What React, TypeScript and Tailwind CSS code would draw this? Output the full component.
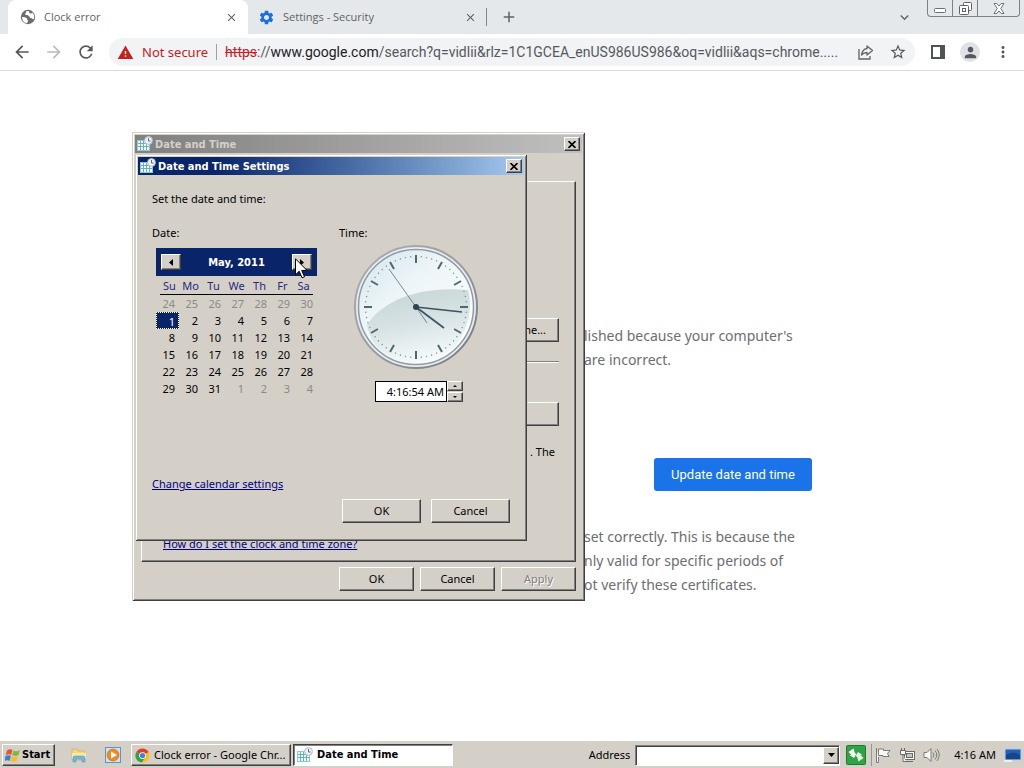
import React from "react";
import {
  MdAdd,
  MdArrowBack,
  MdArrowForward,
  MdClose,
  MdExpandMore,
  MdMoreVert,
  MdPerson,
  MdRefresh,
  MdSettings,
  MdStarBorder,
  MdWarning,
} from "react-icons/md";

const RAISED =
  "border border-t-white border-l-white border-r-[#404040] border-b-[#404040] bg-[#d4d0c8] shadow-[inset_-1px_-1px_0_#808080]";
const FRAME =
  "bg-[#d4d0c8] p-[3px] shadow-[inset_1px_1px_0_#d4d0c8,inset_-1px_-1px_0_#404040,inset_2px_2px_0_#ffffff,inset_-2px_-2px_0_#808080]";
const STRONG = "font-['DejaVu_Sans_Condensed','Noto_Sans',sans-serif] font-bold";

const WEEKDAYS = ["Su", "Mo", "Tu", "We", "Th", "Fr", "Sa"];
const WEEKS = [
  [24, 25, 26, 27, 28, 29, 30],
  [1, 2, 3, 4, 5, 6, 7],
  [8, 9, 10, 11, 12, 13, 14],
  [15, 16, 17, 18, 19, 20, 21],
  [22, 23, 24, 25, 26, 27, 28],
  [29, 30, 31, 1, 2, 3, 4],
];

function DateTimeIcon() {
  return (
    <svg width="16" height="16" viewBox="0 0 16 16" className="shrink-0" aria-hidden="true">
      <rect x="0.5" y="4.5" width="12" height="10" fill="#f4ffff" stroke="#8fc9cf" />
      <path d="M1 7.500h11M1 10.500h11M3.500 5v9M6.500 5v9M9.500 5v9" stroke="#63b3b9" />
      <circle cx="11.500" cy="4.500" r="3.900" fill="#eef1f5" stroke="#b3bac4" />
      <path d="M11.500 2v3h2" fill="none" stroke="#5d6b7b" />
    </svg>
  );
}

function GlobeIcon() {
  return (
    <svg width="16" height="16" viewBox="0 0 16 16" aria-hidden="true">
      <circle cx="8" cy="8" r="7.200" fill="#6a6e72" />
      <path d="M2 8.200q2.400-0.500 4 0.600q1.600 0.300 1.300 1.900q1 0.500 0.600 1.700q-0.900 0.900-0.700 1.900q-4.900-0.700-5.200-6.100z" fill="#fff" />
      <path d="M6 2.300q0.800 2-0.900 2.300q-0.400 1.500 1.400 1.300q1.900-0.200 2.200 1.400q1.700 0.200 1.300 1.800q1.900-0.300 2.600 0.900l1.200 0.200q1.400-4.200-1.600-6.700q-0.500 1.500-2 1q-1.300-0.600-1.200-2.300q-1.600-0.400-3 0.100z" fill="#fff" />
    </svg>
  );
}

function CloseButton({ label }: { label: string }) {
  return (
    <button type="button" aria-label={label} className={`flex h-[14px] w-4 items-center justify-center ${RAISED}`}>
      <svg width="8" height="7" viewBox="0 0 8 7" aria-hidden="true">
        <path d="M0.5 0l7 7M7.5 0l-7 7" stroke="#000" strokeWidth="1.6" />
      </svg>
    </button>
  );
}

function DialogButton({ children, className = "", disabled = false }: { children?: React.ReactNode; className?: string; disabled?: boolean }) {
  return (
    <button
      type="button"
      disabled={disabled}
      className={`h-6 ${RAISED} ${disabled ? "text-[#808080] [text-shadow:1px_1px_0_#ffffff]" : "text-black"} ${className}`}
    >
      {children}
    </button>
  );
}

function Clock() {
  const ticks = Array.from({ length: 60 }, (_, i) => i);
  return (
    <svg width="128" height="128" viewBox="0 0 128 128" role="img" aria-label="4:16:54 AM">
      <defs>
        <linearGradient id="rim" x1="0" y1="0" x2="1" y2="1">
          <stop offset="0" stopColor="#aaafb3" />
          <stop offset="0.5" stopColor="#989ca1" />
          <stop offset="1" stopColor="#74787e" />
        </linearGradient>
        <linearGradient id="face" x1="0" y1="0" x2="0.8" y2="1">
          <stop offset="0" stopColor="#d5e4eb" />
          <stop offset="0.4" stopColor="#edf5f8" />
          <stop offset="1" stopColor="#ffffff" />
        </linearGradient>
        <linearGradient id="shade" x1="0.3" y1="0" x2="0.6" y2="1">
          <stop offset="0" stopColor="#c8d6d7" />
          <stop offset="0.45" stopColor="#d6e2e4" />
          <stop offset="1" stopColor="#f8fcfd" />
        </linearGradient>
      </defs>
      <circle cx="64" cy="64" r="61" fill="#e9ecee" stroke="url(#rim)" strokeWidth="2" />
      <circle cx="64" cy="64" r="57.5" fill="url(#face)" stroke="#8f9ba8" strokeWidth="1.500" />
      <path d="M15 82C28 60 64 42 116 47C121 66 116 87 103 103C85 123 50 127 28 107C21 100 17 92 15 82Z" fill="url(#shade)" />
      {ticks.map((i) =>
        i % 5 === 0 ? (
          <path key={i} d="M64 12v8" stroke="#4c6a6c" strokeWidth="2" transform={`rotate(${i * 6} 64 64)`} />
        ) : (
          <circle key={i} cx="64" cy="13.5" r="0.7" fill="#7b8e96" transform={`rotate(${i * 6} 64 64)`} />
        ),
      )}
      <path d="M64 64L37 26M64 64l11 16" stroke="#626e75" strokeWidth="0.8" />
      <path d="M64 64l28 21" stroke="#3c5360" strokeWidth="1.700" />
      <path d="M64 64l46 5" stroke="#3c5360" strokeWidth="1.700" />
      <circle cx="64" cy="64" r="3" fill="#2c4354" />
    </svg>
  );
}

function Calendar() {
  return (
    <div className="mt-[7px] ml-1 w-[161px]">
      <div className="flex h-7 items-center justify-between bg-[#0a246a] px-[5px]">
        <button type="button" aria-label="Previous month" className={`flex h-4 w-5 items-center justify-center ${RAISED}`}>
          <svg width="4" height="7" viewBox="0 0 4 7" aria-hidden="true">
            <path d="M4 0v7L0 3.500z" />
          </svg>
        </button>
        <span className={`pt-[2px] text-white ${STRONG}`}>May, 2011</span>
        <button type="button" aria-label="Next month" className={`flex h-4 w-5 items-center justify-center ${RAISED}`}>
          <svg width="4" height="7" viewBox="0 0 4 7" aria-hidden="true">
            <path d="M0 0v7l4-3.500z" />
          </svg>
        </button>
      </div>
      <table className="w-full table-fixed border-collapse">
        <thead>
          <tr className="h-[19px]">
            {WEEKDAYS.map((day) => (
              <th key={day} scope="col" className="group p-0 font-normal text-[#28287c]">
                <span className="block h-[18px] border-b border-black leading-[18px] group-first:ml-1 group-last:mr-1">{day}</span>
              </th>
            ))}
          </tr>
        </thead>
        <tbody>
          {WEEKS.map((week, row) => (
            <tr key={row} className="h-[17px]">
              {week.map((day, col) => {
                const outside = (row === 0 && day > 7) || (row === 5 && day < 7);
                const selected = row === 1 && col === 0;
                return (
                  <td key={col} className="p-0">
                    <button
                      type="button"
                      className={`block h-[17px] w-full pr-1 text-right leading-[17px] ${
                        selected ? "border border-dotted border-white bg-[#0a246a] pr-[3px] leading-[15px] text-white" : outside ? "text-[#8c8a86]" : "text-black"
                      }`}
                    >
                      {day}
                    </button>
                  </td>
                );
              })}
            </tr>
          ))}
        </tbody>
      </table>
    </div>
  );
}

function SettingsDialog() {
  return (
    <section aria-label="Date and Time Settings" className={`absolute top-[154px] left-[135px] flex h-[387px] w-[392px] flex-col ${FRAME}`}>
      <header className="flex h-[18px] items-center gap-[2px] bg-linear-to-r from-[#0a246a] from-20% to-[#a6caf0] px-[2px]">
        <DateTimeIcon />
        <h2 className={`flex-1 pt-px text-white ${STRONG}`}>Date and Time Settings</h2>
        <CloseButton label="Close settings" />
      </header>
      <div className="flex flex-1 flex-col px-[14px] pt-4 pb-[15px]">
        <p>Set the date and time:</p>
        <div className="mt-[18px] flex">
          <div className="w-[187px]">
            <p>Date:</p>
            <Calendar />
          </div>
          <div>
            <label htmlFor="time">Time:</label>
            <div className="mt-[2px] ml-[13px]">
              <Clock />
            </div>
            <div className="mt-[10px] ml-9 flex">
              <input id="time" defaultValue="4:16:54 AM" className="h-[21px] w-[72px] border border-black bg-white pr-[2px] text-right" />
              <div className="flex w-4 flex-col gap-px">
                <button type="button" aria-label="Increase" className={`flex h-[10px] items-center justify-center ${RAISED}`}>
                  <svg width="4" height="2" viewBox="0 0 4 2" aria-hidden="true">
                    <path d="M0 2h4L2 0z" />
                  </svg>
                </button>
                <button type="button" aria-label="Decrease" className={`flex h-[10px] items-center justify-center ${RAISED}`}>
                  <svg width="4" height="2" viewBox="0 0 4 2" aria-hidden="true">
                    <path d="M0 0h4L2 2z" />
                  </svg>
                </button>
              </div>
            </div>
          </div>
        </div>
        <a href="#calendar" className="mt-auto self-start text-[#00007f] underline">
          Change calendar settings
        </a>
        <div className="mt-[7px] flex justify-end gap-[10px]">
          <DialogButton className="w-[79px]">OK</DialogButton>
          <DialogButton className="w-[79px]">Cancel</DialogButton>
        </div>
      </div>
    </section>
  );
}

function DateTimeWindow() {
  return (
    <section aria-label="Date and Time" className={`absolute top-[132px] left-[132px] flex h-[469px] w-[453px] flex-col ${FRAME}`}>
      <header className="flex h-[18px] items-center gap-[2px] bg-linear-to-r from-[#808080] to-[#c0c0c0] px-[2px]">
        <DateTimeIcon />
        <h2 className={`flex-1 pt-px text-[#d4d0c8] ${STRONG}`}>Date and Time</h2>
        <CloseButton label="Close" />
      </header>
      <div className="flex flex-1 flex-col px-[6px] pt-7 pb-[7px]">
        <div className={`flex flex-1 flex-col px-4 ${RAISED}`}>
          <DialogButton className="mt-[136px] w-[130px] self-end pr-3 text-right">ne...</DialogButton>
          <hr className="mt-[19px] border-t-[#808080] shadow-[0_1px_0_#ffffff]" />
          <DialogButton className="mt-10 w-[130px] self-end" />
          <p className="mt-[18px] self-end pr-1">. The</p>
          <a href="#help" className="mt-auto mb-[9px] ml-[5px] self-start text-[#00007f] underline">
            How do I set the clock and time zone?
          </a>
        </div>
        <div className="mt-[5px] flex justify-end gap-[6px]">
          <DialogButton className="w-[75px]">OK</DialogButton>
          <DialogButton className="w-[75px]">Cancel</DialogButton>
          <DialogButton className="w-[75px]" disabled>
            Apply
          </DialogButton>
        </div>
      </div>
    </section>
  );
}

function TabStrip() {
  return (
    <div className="flex h-[34px] items-stretch bg-[#e4e8eb] pl-2 font-['Open_Sans',sans-serif] text-[#5f6368]">
      <div className="flex w-[240px] items-center rounded-t-lg bg-white pr-[10px] pl-3">
        <GlobeIcon />
        <span className="ml-2 flex-1">Clock error</span>
        <button type="button" aria-label="Close tab">
          <MdClose size={13} />
        </button>
      </div>
      <div className="flex w-[238px] items-center pr-[9px] pl-[10px]">
        <MdSettings size={17} className="text-[#1a6fe0]" />
        <span className="ml-2 flex-1">Settings - Security</span>
        <button type="button" aria-label="Close tab">
          <MdClose size={13} />
        </button>
      </div>
      <div className="my-2 w-px bg-[#858a8f]" />
      <button type="button" aria-label="New tab" className="ml-[13px]">
        <MdAdd size={18} />
      </button>
      <div className="flex-1" />
      <button type="button" aria-label="Search tabs" className="mr-[14px]">
        <MdExpandMore size={17} />
      </button>
      <div className="mr-1 flex h-[17px] w-[93px] rounded-b border border-t-0 border-[#7b8187]">
        <button type="button" aria-label="Minimize" className="flex w-[25px] items-center justify-center border-r border-[#7b8187]">
          <svg width="12" height="5" viewBox="0 0 12 5" className="mt-1" aria-hidden="true">
            <rect x="0.5" y="0.5" width="11" height="4" rx="1" fill="#fff" stroke="#6b7076" />
          </svg>
        </button>
        <button type="button" aria-label="Restore" className="flex w-[25px] items-center justify-center border-r border-[#7b8187]">
          <svg width="13" height="13" viewBox="0 0 13 13" fill="#fff" stroke="#5c6167" aria-hidden="true">
            <rect x="4.5" y="0.5" width="8" height="8" rx="1" />
            <rect x="0.5" y="3.5" width="9" height="9" rx="1" />
            <rect x="3.5" y="6.5" width="3" height="3" />
          </svg>
        </button>
        <button type="button" aria-label="Close window" className="flex flex-1 items-center justify-center">
          <svg width="12" height="11" viewBox="0 0 12 11" aria-hidden="true">
            <path d="M1 0.500h2.800L6 3l2.200-2.500H11L7.800 5.500L11 10.500H8.200L6 8l-2.200 2.500H1L4.200 5.500z" fill="#fff" stroke="#6b7076" />
          </svg>
        </button>
      </div>
    </div>
  );
}

function Toolbar() {
  return (
    <div className="flex h-[37px] items-center border-b border-[#d9dbdd] bg-white pr-3 pl-3 text-[#55595e]">
      <button type="button" aria-label="Back">
        <MdArrowBack size={20} />
      </button>
      <button type="button" aria-label="Forward" className="ml-3 text-[#b9bbbe]">
        <MdArrowForward size={20} />
      </button>
      <button type="button" aria-label="Reload" className="ml-3">
        <MdRefresh size={20} />
      </button>
      <div className="ml-[13px] flex h-7 min-w-0 flex-1 items-center rounded-full bg-[#f1f3f4] px-2">
        <MdWarning size={17} className="shrink-0 text-[#c5221f]" />
        <span className="ml-2 shrink-0 text-[13px] text-[#c5221f]">Not secure</span>
        <span className="mx-2 h-4 w-px shrink-0 bg-[#9aa0a6]" />
        <div role="textbox" aria-label="Address and search bar" className="min-w-0 flex-1 overflow-hidden font-['Roboto',sans-serif] text-[14px] whitespace-nowrap">
          <span className="text-[#c5221f] line-through">https</span>://<span className="text-[#202124]">www.google.com</span>
          /search?q=vidlii&amp;rlz=1C1GCEA_enUS986US986&amp;oq=vidlii&amp;aqs=chrome.....
        </div>
        <button type="button" aria-label="Share" className="ml-3">
          <svg width="18" height="16" viewBox="0 0 18 16" fill="none" stroke="#5f6368" strokeWidth="1.3" aria-hidden="true">
            <path d="M2 5v10h11v-3" />
            <path d="M10 2l5.5 4.5L10 11V8.5C7.500 8.500 5.800 9.300 4.500 11C5 7.500 6.800 5 10 4.500Z" strokeLinejoin="round" />
          </svg>
        </button>
        <button type="button" aria-label="Bookmark" className="ml-[14px]">
          <MdStarBorder size={18} />
        </button>
      </div>
      <button type="button" aria-label="Side panel" className="ml-4">
        <svg width="14" height="14" viewBox="0 0 14 14" aria-hidden="true">
          <path d="M1 1h12v12H1z" fill="none" stroke="#4f5358" strokeWidth="2" />
          <path d="M9 1h4v12H9z" fill="#4f5358" />
        </svg>
      </button>
      <button type="button" aria-label="Profile" className="ml-[15px] flex size-5 items-center justify-center rounded-full bg-[#dee1e6]">
        <MdPerson size={17} />
      </button>
      <button type="button" aria-label="Menu" className="ml-[14px]">
        <MdMoreVert size={18} />
      </button>
    </div>
  );
}

function ClockErrorPage() {
  return (
    <main className="mx-auto w-full max-w-[600px] flex-1 pt-[253px] text-[14px] leading-6 text-[#6b6e72]">
      <p className="pl-[372px]">
        lished because your computer's
        <br />
        are incorrect.
      </p>
      <div className="mt-[86px] flex justify-end">
        <button type="button" className="h-[33px] w-[158px] rounded-[3px] bg-[#1a73e8] font-['Roboto',sans-serif] text-[13px] text-white">
          Update date and time
        </button>
      </div>
      <p className="mt-[34px] pl-[372px]">
        set correctly. This is because the
        <br />
        nly valid for specific periods of
        <br />
        ot verify these certificates.
      </p>
    </main>
  );
}

function Taskbar() {
  return (
    <footer className="flex h-7 items-center bg-[#d4d0c8] px-[2px] pt-[2px] text-black shadow-[inset_0_1px_0_#ffffff]">
      <button type="button" className={`flex h-[22px] w-[53px] items-center gap-px pl-[2px] ${STRONG} ${RAISED}`}>
        <svg width="16" height="15" viewBox="0 0 16 15" aria-hidden="true">
          <path d="M2 2.500C4 1 6 1 7.500 2L6.200 7C4.500 6 3 6 0.800 7Z" fill="#e2572b" />
          <path d="M8.500 2.500C10.500 3.600 12.500 3.500 15 2L13.500 7C11.500 8.300 9.300 8.300 7.200 7.300Z" fill="#7fb93c" />
          <path d="M0.500 8C2.500 7 4.500 7 6 8L4.600 13C3 12 1.500 12-0.500 13Z" fill="#3f7ed0" />
          <path d="M7 8.300C9 9.400 11 9.400 13.200 8L11.800 13C9.800 14.300 7.600 14.200 5.600 13.200Z" fill="#f3bf2e" />
        </svg>
        Start
      </button>
      <button type="button" aria-label="Windows Explorer" className="ml-4">
        <svg width="16" height="16" viewBox="0 0 16 16" aria-hidden="true">
          <path d="M1 2h5l1 2h7v9H1z" fill="#f2d878" stroke="#cba94c" strokeWidth="0.6" />
          <path d="M1 6h14v6H1z" fill="#f9e9a5" />
          <path d="M2 15v-4q0-2 2-2h8q2 0 2 2v4h-3v-3H5v3z" fill="#74b7e0" stroke="#4b8fbd" strokeWidth="0.5" />
        </svg>
      </button>
      <button type="button" aria-label="Media Player" className="ml-[18px]">
        <svg width="16" height="16" viewBox="0 0 16 16" aria-hidden="true">
          <rect x="0.5" y="0.5" width="15" height="15" fill="#cfe2f4" stroke="#5f94c9" />
          <circle cx="8" cy="8" r="6" fill="#f08a1d" stroke="#c86a0c" strokeWidth="0.6" />
          <path d="M6 4.500v7L12 8z" fill="#fff" />
        </svg>
      </button>
      <button type="button" className={`ml-[10px] flex h-[22px] w-40 items-center gap-1 pl-[3px] whitespace-nowrap ${RAISED}`}>
        <svg width="15" height="15" viewBox="0 0 16 16" className="shrink-0" aria-hidden="true">
          <circle cx="8" cy="8" r="7.500" fill="#fbc116" />
          <path d="M8 8L1.500 4.200A7.500 7.500 0 0 1 14.500 4.200Z" fill="#e33b2e" />
          <path d="M8 8L1.500 4.200A7.500 7.500 0 0 0 7.300 15.500L10.500 10Z" fill="#2fa24c" />
          <circle cx="8" cy="8" r="3.600" fill="#fff" />
          <circle cx="8" cy="8" r="2.800" fill="#3f7fe8" />
        </svg>
        Clock error - Google Chr...
      </button>
      <button
        type="button"
        className={`ml-[2px] flex h-[22px] w-40 items-center gap-1 border border-t-[#404040] border-r-white border-b-white border-l-[#404040] bg-white pl-[3px] shadow-[inset_1px_1px_0_#808080] ${STRONG}`}
      >
        <DateTimeIcon />
        Date and Time
      </button>
      <div className="flex-1" />
      <label htmlFor="address">Address</label>
      <div className="ml-[5px] flex h-[21px] w-[205px] border border-t-[#808080] border-r-white border-b-white border-l-[#808080] bg-white shadow-[inset_1px_1px_0_#404040]">
        <input id="address" className="min-w-0 flex-1 bg-transparent px-1" />
        <button type="button" aria-label="Show addresses" className={`my-px flex w-4 items-center justify-center ${RAISED}`}>
          <svg width="7" height="4" viewBox="0 0 7 4" aria-hidden="true">
            <path d="M0 0h7L3.500 4z" />
          </svg>
        </button>
      </div>
      <button type="button" aria-label="Go" className="ml-[6px]">
        <svg width="20" height="20" viewBox="0 0 20 20" aria-hidden="true">
          <rect x="0.5" y="0.5" width="19" height="19" rx="1" fill="#2fa345" stroke="#1d7a30" />
          <path d="M2.500 7L7.500 3.500L9 8.500h1.500L8 13L3.500 10h2z" fill="#fff" />
          <path d="M17.500 13L12.500 16.500L11 11.500H9.500L12 7l4.500 3h-2z" fill="#e6f8e6" />
        </svg>
      </button>
      <div className="ml-[5px] h-[22px] w-px bg-[#9a968e]" />
      <div className="flex items-center gap-2 pl-[3px]">
        <svg width="16" height="16" viewBox="0 0 16 16" fill="#f8f8f6" stroke="#7d7b77" aria-hidden="true">
          <path d="M1.500 1v14.500h2V10M3.500 2h5v1.500h6.500L12.500 6.500L14 9.500H8V8.500H3.500Z" />
        </svg>
        <svg width="16" height="16" viewBox="0 0 16 16" fill="#f8f8f6" stroke="#6c6a67" aria-hidden="true">
          <rect x="5.500" y="4.500" width="10" height="8" />
          <rect x="7.500" y="6.500" width="6" height="4" fill="#c8c6c1" />
          <path d="M7 14.500h7M1.500 3.500h5v4h-5zM2.500 1v2M5.500 1v2M4 8v6.500h3" />
        </svg>
        <svg width="17" height="16" viewBox="0 0 17 16" fill="none" stroke="#7d7b77" aria-hidden="true">
          <path d="M1 5.500h3l4-4v13l-4-4H1z" fill="#f8f8f6" />
          <path d="M10 5.500q2 2.500 0 5M12 3.500q3.500 4.500 0 9M14 2q4.500 6 0 12" />
        </svg>
        <time className="ml-[6px] whitespace-nowrap">4:16 AM</time>
        <svg width="18" height="16" viewBox="0 0 18 16" aria-hidden="true">
          <rect x="1" y="2" width="16" height="11" fill="#2260b8" stroke="#b6cbe6" />
          <path d="M2 8q7-5 14 0v4H2z" fill="#164689" />
          <path d="M0 14h8" stroke="#f0f0f0" strokeWidth="2" />
        </svg>
      </div>
    </footer>
  );
}

export default function App() {
  return (
    <div className="relative flex min-h-screen flex-col overflow-hidden bg-white font-['Noto_Sans',sans-serif] text-[11px] leading-4 text-black">
      <TabStrip />
      <Toolbar />
      <ClockErrorPage />
      <Taskbar />
      <DateTimeWindow />
      <SettingsDialog />
      {/* Mouse pointer */}
      <svg width="14" height="21" viewBox="0 0 14 21" className="pointer-events-none absolute top-[258px] left-[295px]" aria-hidden="true">
        <path d="M0.500 0.800v16l3.700-3.600 2.800 6.600 2.500-1-2.800-6.400h5.300z" fill="#fff" stroke="#000" />
      </svg>
    </div>
  );
}
